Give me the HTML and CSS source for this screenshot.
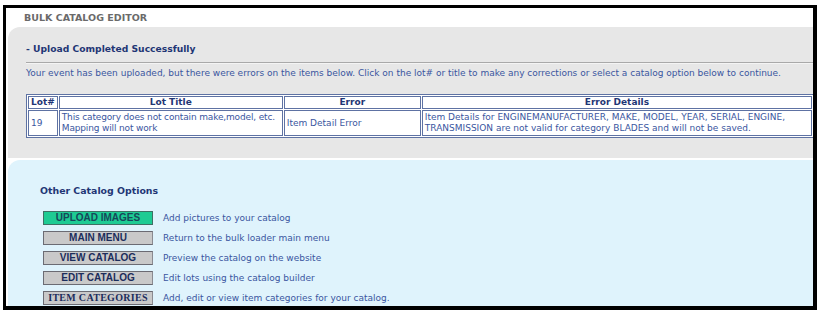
FILE: index.html
```html
<!DOCTYPE html>
<html>
<head>
<meta charset="utf-8">
<link rel="stylesheet" href="styles.css">
</head>
<body>
<div class="frame">
  <div class="page-head">BULK CATALOG EDITOR</div>
  <div class="status-panel">
    <div class="status-title">- Upload Completed Successfully</div>
    <div class="rule"></div>
    <div class="intro">Your event has been uploaded, but there were errors on the items below. Click on the lot# or title to make any corrections or select a catalog option below to continue.</div>
    <table class="errors">
      <tr>
        <th class="c-lot">Lot#</th>
        <th class="c-title">Lot Title</th>
        <th class="c-err">Error</th>
        <th class="c-det">Error Details</th>
      </tr>
      <tr>
        <td>19</td>
        <td class="nowrap">This category does not contain make,model, etc.<br>Mapping will not work</td>
        <td>Item Detail Error</td>
        <td>Item Details for ENGINEMANUFACTURER, MAKE, MODEL, YEAR, SERIAL, ENGINE, TRANSMISSION are not valid for category BLADES and will not be saved.</td>
      </tr>
    </table>
  </div>
  <div class="options-panel">
    <div class="options-title">Other Catalog Options</div>
    <div class="opt-list">
      <div class="opt"><span class="btn btn-green">UPLOAD IMAGES</span><span class="desc">Add pictures to your catalog</span></div>
      <div class="opt"><span class="btn">MAIN MENU</span><span class="desc">Return to the bulk loader main menu</span></div>
      <div class="opt"><span class="btn">VIEW CATALOG</span><span class="desc">Preview the catalog on the website</span></div>
      <div class="opt"><span class="btn">EDIT CATALOG</span><span class="desc">Edit lots using the catalog builder</span></div>
      <div class="opt"><span class="btn btn-serif">ITEM CATEGORIES</span><span class="desc">Add, edit or view item categories for your catalog.</span></div>
    </div>
  </div>
</div>
</body>
</html>
```

FILE: styles.css
```css
html, body {
  margin: 0;
  padding: 0;
  background: #ffffff;
}
body {
  font-family: "DejaVu Sans", Verdana, sans-serif;
  font-size: 9px;
  color: #3a56a0;
}
.frame {
  margin: 5px 0 0 3px;
  width: 807px;
  height: 298px;
  border: 3px solid #000;
  border-right-width: 4px;
  border-bottom-width: 4px;
  background: #fff;
  display: flex;
  flex-direction: column;
  overflow: hidden;
}
.page-head {
  height: 19px;
  padding: 4px 0 0 18px;
  box-sizing: border-box;
  font-weight: bold;
  font-size: 9.5px;
  line-height: 12px;
  color: #6a6a6a;
}
.status-panel {
  margin-left: 2px;
  background: #e7e7e7;
  border-top-left-radius: 12px;
  padding: 16px 0 0 18px;
  height: 131px;
  box-sizing: border-box;
}
.status-title {
  font-weight: bold;
  font-size: 9.2px;
  line-height: 11px;
  color: #1f3675;
}
.rule {
  margin-top: 8px;
  height: 1px;
  background: #a9a9a9;
  border-bottom: 1px solid #f4f4f4;
}
.intro {
  margin-top: 4px;
  line-height: 11px;
  white-space: nowrap;
}
.errors {
  margin-top: 15px;
  width: 788px;
  border: 1px solid #5e72a3;
  border-spacing: 1px;
  background: #ffffff;
  font-size: 9px;
}
.errors th, .errors td {
  border: 1px solid #5e72a3;
  padding: 0 2px;
  line-height: 11px;
}
.errors th {
  font-weight: bold;
  color: #1f3675;
  text-align: center;
}
.errors td {
  text-align: left;
  color: #3a56a0;
  vertical-align: middle;
  padding-top: 1px;
  padding-bottom: 1px;
}
.errors td.nowrap {
  white-space: nowrap;
  letter-spacing: -0.15px;
}
.c-lot { width: 22px; }
.c-title { width: 218px; }
.c-err { width: 131px; }
.options-panel {
  margin-top: 2px;
  margin-left: 2px;
  flex: 1;
  background: #dff3fc;
  border-top-left-radius: 12px;
  padding: 25px 0 0 32px;
}
.options-title {
  font-weight: bold;
  font-size: 9.4px;
  line-height: 12px;
  color: #1f3675;
}
.opt-list {
  margin-top: 14px;
  padding-left: 3px;
  display: flex;
  flex-direction: column;
  gap: 6px;
}
.opt {
  display: flex;
  align-items: center;
  height: 14px;
}
.btn {
  width: 110px;
  height: 14px;
  box-sizing: border-box;
  background: #c9c9c9;
  border: 1px solid #6b6b73;
  border-right-color: #8a8a90;
  font-family: "Liberation Sans", Arial, sans-serif;
  font-weight: bold;
  font-size: 10px;
  color: #1b2d5c;
  text-align: center;
  line-height: 12px;
}
.btn-green {
  background: #1ecb93;
  border-color: #3f6f64;
  color: #17475a;
}
.btn-serif {
  font-family: "Liberation Serif", "Times New Roman", serif;
  font-size: 10px;
  letter-spacing: 0.3px;
}
.desc {
  margin-left: 10px;
}
```
